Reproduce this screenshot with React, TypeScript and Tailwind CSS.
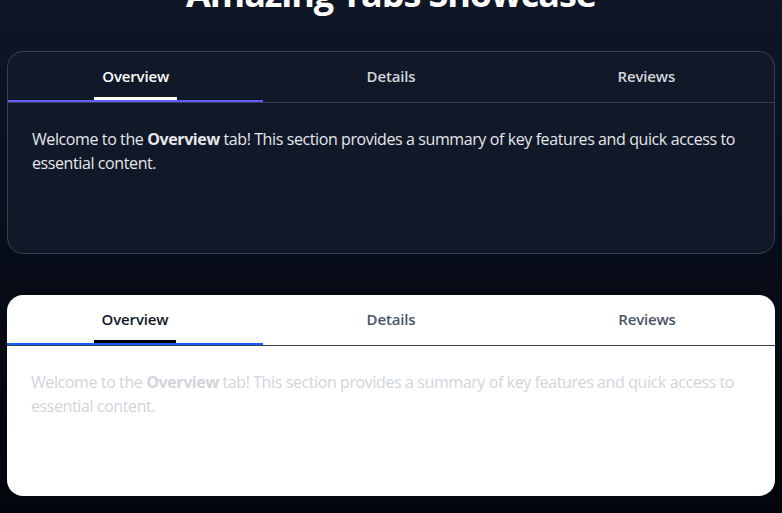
import React, { useState } from 'react';

const tabs = ['Overview', 'Details', 'Reviews'];

function TabCard({ light }: { light?: boolean }) {
  const [active, setActive] = useState(0);

  return (
    <div
      className={
        light
          ? 'rounded-2xl bg-white overflow-hidden'
          : 'rounded-2xl border border-gray-700 bg-[#111827] overflow-hidden'
      }
    >
      <div className="relative flex border-b border-gray-700">
        {tabs.map((t, i) => (
          <button
            key={t}
            onClick={() => setActive(i)}
            className="relative flex-1 h-[50px] flex justify-center"
          >
            <span
              className={
                'relative h-full flex items-center px-2 pb-[2px] text-[15px] font-semibold tracking-[-0.01em] ' +
                (i === active
                  ? light
                    ? 'text-gray-900'
                    : 'text-white'
                  : light
                    ? 'text-gray-600'
                    : 'text-gray-300')
              }
            >
              {t}
              {i === active && (
                <span
                  className={
                    light
                      ? 'absolute left-0 right-0 bottom-[2px] h-[3px] bg-black'
                      : 'absolute left-0 right-0 bottom-[2px] h-[3px] bg-white'
                  }
                />
              )}
            </span>
            {i === active && (
              <span
                className={
                  light
                    ? 'absolute left-0 right-0 bottom-0 h-[2px] bg-blue-600'
                    : 'absolute left-0 right-0 bottom-0 h-[2px] bg-indigo-500'
                }
              />
            )}
          </button>
        ))}
      </div>
      <div className="px-6 pt-6 min-h-[150px]">
        <p
          className={
            light
              ? 'text-base leading-6 tracking-[-0.025em] text-gray-300'
              : 'text-base leading-6 tracking-[-0.025em] text-gray-200'
          }
        >
          Welcome to the <strong className="font-bold">Overview</strong> tab! This section provides a summary of key
          features and quick access to essential content.
        </p>
      </div>
    </div>
  );
}

export default function App() {
  return (
    <div
      className="min-h-[513px] bg-gradient-to-b from-[#0f1626] to-[#02050b] px-[7px] pb-4 overflow-hidden"
      style={{ fontFamily: '"Open Sans", "Noto Sans", sans-serif' }}
    >
      <h1 className="-mt-[28px] mb-[35px] text-center text-4xl font-bold leading-[44px] tracking-[-0.03em] text-white">
        Amazing Tabs Showcase
      </h1>
      <div className="flex flex-col gap-[41px]">
        <TabCard />
        <TabCard light />
      </div>
    </div>
  );
}
